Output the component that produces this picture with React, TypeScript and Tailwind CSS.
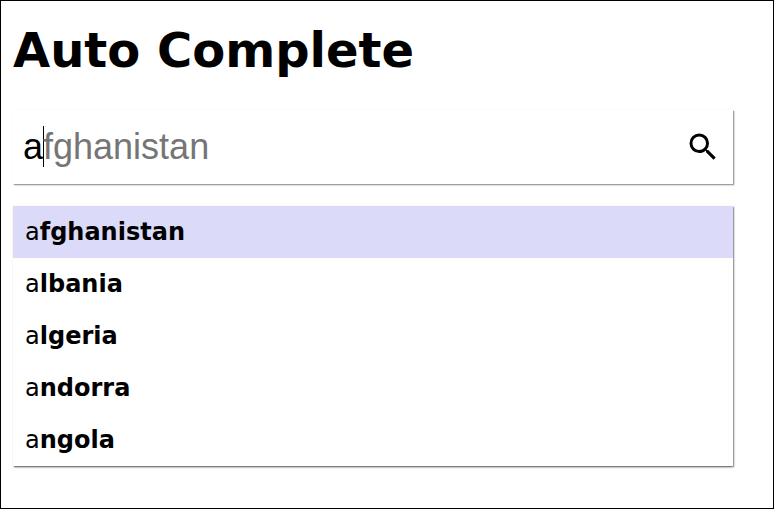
const items = ["fghanistan", "lbania", "lgeria", "ndorra", "ngola"];

export default function App() {
  return (
    <main className="h-[509px] w-[774px] overflow-hidden border border-black bg-white pt-[19px] pl-3 font-['DejaVu_Sans',sans-serif] text-black">
      <h1 className="h-[60px] text-[48px] leading-[60px] font-bold">Auto Complete</h1>
      <div className="mt-[30px] flex h-[74px] w-[720px] items-center justify-between bg-white pr-3 pl-[10px] shadow-[1px_1px_1px_rgba(0,0,0,0.25),1px_1px_2px_rgba(0,0,0,0.25)]">
        <div className="mb-px flex h-[41px] items-center font-['Liberation_Sans',Arial,sans-serif] text-[36px] leading-[41px]">
          <span>a</span>
          <span className="-mr-px h-[41px] w-px shrink-0 bg-black" />
          <span className="text-[#757575]">fghanistan</span>
        </div>
        <svg className="h-9 w-9" viewBox="0 0 24 24">
          <path d="M15.5 14h-.79l-.28-.27A6.471 6.471 0 0 0 16 9.5 6.5 6.5 0 1 0 9.5 16c1.61 0 3.09-.59 4.23-1.57l.27.28v.79l5 4.99L20.49 19l-4.99-5zm-6 0C7.01 14 5 11.99 5 9.5S7.01 5 9.5 5 14 7.01 14 9.5 11.99 14 9.5 14z" />
        </svg>
      </div>
      <ul className="mt-[22px] w-[720px] shadow-[1px_1px_1px_rgba(0,0,0,0.25),1px_1px_2px_rgba(0,0,0,0.25),0_2px_2px_-1px_rgba(0,0,0,0.3)]">
        {items.map((rest, i) => (
          <li key={rest} className={`h-[52px] pl-3 text-[24px] leading-[52px] ${i === 0 ? "bg-[#dcdaf9]" : "bg-white"}`}>
            a<b className="font-bold">{rest}</b>
          </li>
        ))}
      </ul>
    </main>
  );
}
